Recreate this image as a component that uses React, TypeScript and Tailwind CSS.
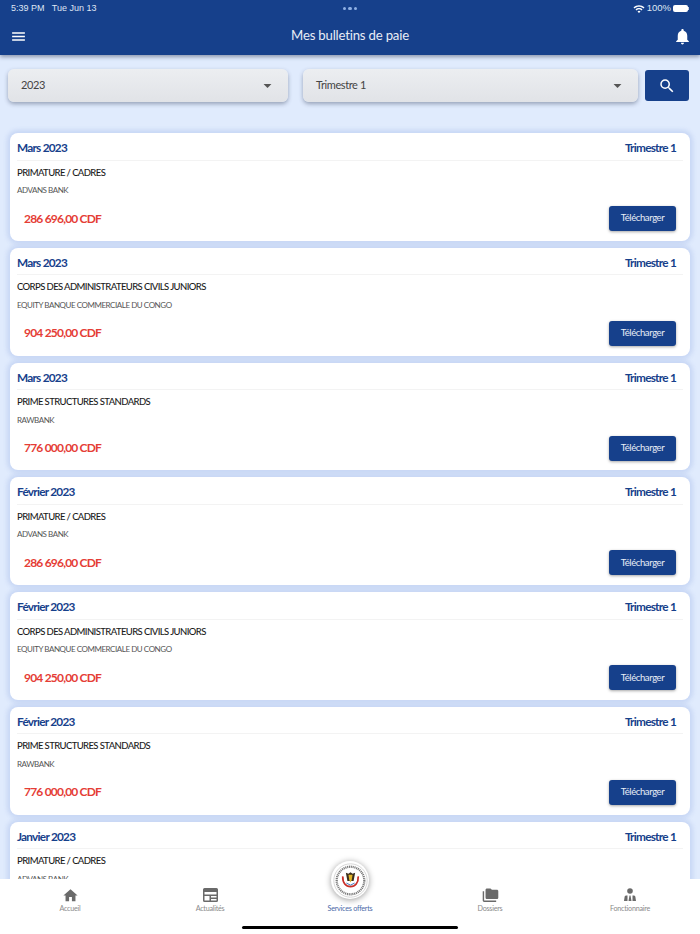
import { MdHome, MdMenu, MdNotifications, MdSearch, MdArrowDropDown, MdWifi, MdFolderCopy } from "react-icons/md";

const cards = [
  ["Mars 2023", "PRIMATURE / CADRES", "ADVANS BANK", "286\u2005696,00 CDF"],
  ["Mars 2023", "CORPS DES ADMINISTRATEURS CIVILS JUNIORS", "EQUITY BANQUE COMMERCIALE DU CONGO", "904\u2005250,00 CDF"],
  ["Mars 2023", "PRIME STRUCTURES STANDARDS", "RAWBANK", "776\u2005000,00 CDF"],
  ["Février 2023", "PRIMATURE / CADRES", "ADVANS BANK", "286\u2005696,00 CDF"],
  ["Février 2023", "CORPS DES ADMINISTRATEURS CIVILS JUNIORS", "EQUITY BANQUE COMMERCIALE DU CONGO", "904\u2005250,00 CDF"],
  ["Février 2023", "PRIME STRUCTURES STANDARDS", "RAWBANK", "776\u2005000,00 CDF"],
  ["Janvier 2023", "PRIMATURE / CADRES", "ADVANS BANK", "286\u2005696,00 CDF"],
];

function Select({ label, className }: { label: string; className: string }) {
  return (
    <div className={`h-[33px] flex items-center justify-between pl-[13px] pr-[11px] rounded-[6px] bg-gradient-to-b from-[#eceef1] to-[#e1e3e7] shadow-[0_2px_4px_rgba(60,70,100,0.45)] ${className}`}>
      <span className="text-[11px] tracking-[-0.4px] text-[#444]">{label}</span>
      <MdArrowDropDown className="text-[#555] text-[19px]" />
    </div>
  );
}

function Card({ c }: { c: string[] }) {
  return (
    <div className="shrink-0 h-[107.8px] bg-white rounded-[8px] px-[7px] shadow-[0_0_4px_3px_rgba(170,190,235,0.45)]">
      <div className="h-[27.500px] pt-[3px] pr-[7px] flex items-center justify-between border-b border-[#f3f3f3] text-[#16408b] text-[11.800px] font-bold tracking-[-0.750px]">
        <span>{c[0]}</span>
        <span>Trimestre 1</span>
      </div>
      <div className="mt-[6px] text-[9.500px] leading-[12px] font-medium tracking-[-0.6px] text-[#1c1c1c]">{c[1]}</div>
      <div className="mt-[6.500px] text-[8px] leading-[11px] tracking-[-0.45px] text-[#555]">{c[2]}</div>
      <div className="mt-[10px] pr-[7px] flex items-center justify-between">
        <span className="ml-[7px] text-[12px] font-bold tracking-[-0.8px] text-[#e53d36]">{c[3]}</span>
        <button className="w-[67px] h-[25px] rounded-[3px] bg-[#16408b] text-[#e8edf6] text-[9.500px] tracking-[-0.4px] shadow-[0_1px_3px_rgba(0,0,0,0.35)]">Télécharger</button>
      </div>
    </div>
  );
}

function Tab({ label, children, active }: { label: string; children?: React.ReactNode; active?: boolean }) {
  return (
    <div className="w-[140px] flex flex-col items-center pt-[8px]">
      <div className="h-[16px] flex items-center justify-center text-[#6a6a6a]">{children}</div>
      <span className={`mt-[1px] text-[7.200px] tracking-[-0.25px] leading-[10px] ${active ? "text-[#4a6aa8]" : "text-[#8b8b8b]"}`}>{label}</span>
    </div>
  );
}

function Seal() {
  return (
    <div className="absolute left-1/2 -translate-x-1/2 -top-[18px] w-[38px] h-[38px] rounded-full bg-white shadow-[0_1px_6px_rgba(0,0,0,0.4)] flex items-center justify-center">
      <svg width="35" height="35" viewBox="0 0 34 34">
        <circle cx="17" cy="17" r="16.200" fill="#fff" stroke="#cfcfcf" strokeWidth="0.8" />
        <circle cx="17" cy="17" r="13.400" fill="none" stroke="#7a7a7a" strokeWidth="2.200" strokeDasharray="1.100 0.700" />
        <circle cx="17" cy="17" r="11.500" fill="#fff" />
        <path d="M9.500 13c-.3 6.500 3 10 7.500 10s7.800-3.500 7.500-10" fill="none" stroke="#c8302a" strokeWidth="1.700" />
        <path d="M12.500 9.500l2.500 1 2-1.500 2 1.500 2.500-1-1.500 8h-6z" fill="#3a2d1c" />
        <path d="M15 11.500h4l-.8 5-1.200 2.500-1.200-2.500z" fill="#e0b52a" />
        <path d="M13 19.500l4 2 4-2" fill="none" stroke="#2f6fba" strokeWidth="0.900" />
      </svg>
    </div>
  );
}

export default function App() {
  return (
    <div className="relative w-[700px] h-[934px] overflow-hidden flex flex-col bg-[#e0ebfd] font-['Lato','Open_Sans',sans-serif]">
      <header className="shrink-0 h-[55px] bg-[#16408b] text-white shadow-[0_2px_4px_rgba(40,50,80,0.45)] z-10">
        <div className="h-[17px] flex items-center justify-between px-[11px] font-['Liberation_Sans',sans-serif] text-[9px] text-[#dfe6f3]">
          <span className="w-[120px] whitespace-pre">5:39 PM   Tue Jun 13</span>
          <div className="flex gap-[2px]">
            <i className="w-[3.500px] h-[3.500px] rounded-full bg-[#8fb0e4]" />
            <i className="w-[3.500px] h-[3.500px] rounded-full bg-[#8fb0e4]" />
            <i className="w-[3.500px] h-[3.500px] rounded-full bg-[#8fb0e4]" />
          </div>
          <div className="w-[120px] flex items-center justify-end gap-[2px]">
            <MdWifi className="text-[12px] text-white" />
            <span className="text-[9.500px]">100%</span>
            <span className="flex items-center">
              <span className="w-[15px] h-[7px] rounded-[2px] bg-white" />
              <span className="w-[1px] h-[3px] bg-[#c5d0e5]" />
            </span>
          </div>
        </div>
        <div className="h-[38px] flex items-center justify-between pl-[11px] pr-[8px]">
          <MdMenu className="text-[17px] -ml-[1px]" />
          <span className="text-[13.200px] tracking-[-0.2px] text-[#e8edf6]">Mes bulletins de paie</span>
          <MdNotifications className="text-[19px]" />
        </div>
      </header>
      <main className="flex-1 min-h-0 overflow-hidden">
        <div className="mt-[14px] flex items-center pl-[8px] gap-[15px]">
          <Select label="2023" className="w-[280px]" />
          <div className="flex items-center gap-[7px]">
            <Select label="Trimestre 1" className="w-[335px]" />
            <button className="w-[44px] h-[31px] rounded-[3px] bg-[#16408b] text-white flex items-center justify-center">
              <MdSearch className="text-[18px]" />
            </button>
          </div>
        </div>
        <div className="mt-[31px] mx-[10px] flex flex-col gap-[7px]">
          {cards.map((c, i) => (
            <Card key={i} c={c} />
          ))}
        </div>
      </main>
      <nav className="relative shrink-0 h-[55px] bg-white z-10 flex">
        <Tab label="Accueil">
          <MdHome className="text-[17px]" />
        </Tab>
        <Tab label="Actualités">
          <svg width="15" height="14" viewBox="0 0 15 14" fill="#6a6a6a">
            <path fillRule="evenodd" d="M1.500 0h12A1.500 1.500 0 0 1 15 1.500v11a1.500 1.500 0 0 1-1.500 1.500h-12A1.500 1.500 0 0 1 0 12.500v-11A1.500 1.500 0 0 1 1.500 0zM1.500 4v2.500h12V4zm0 4v4.500h5V8zm6.500 0v1.500h5.500V8zm0 3v1.500h5.500V11z" />
          </svg>
        </Tab>
        <Tab label="Services offerts" active />
        <Tab label="Dossiers">
          <MdFolderCopy className="text-[17px]" />
        </Tab>
        <Tab label="Fonctionnaire">
          <svg width="12" height="14" viewBox="0 0 12 14" fill="#6a6a6a">
            <circle cx="6" cy="3" r="2.800" />
            <path d="M0 13l.6-4c.1-1 .8-1.500 1.900-1.500H3.500V13zM4.500 13l1-5.500h1l1 5.500zM8.500 13V7.500h1c1.100 0 1.800.5 1.900 1.500l.6 4z" />
          </svg>
        </Tab>
        <Seal />
        <div className="absolute left-[242px] bottom-[5px] w-[216px] h-[3px] rounded-full bg-black" />
      </nav>
    </div>
  );
}
